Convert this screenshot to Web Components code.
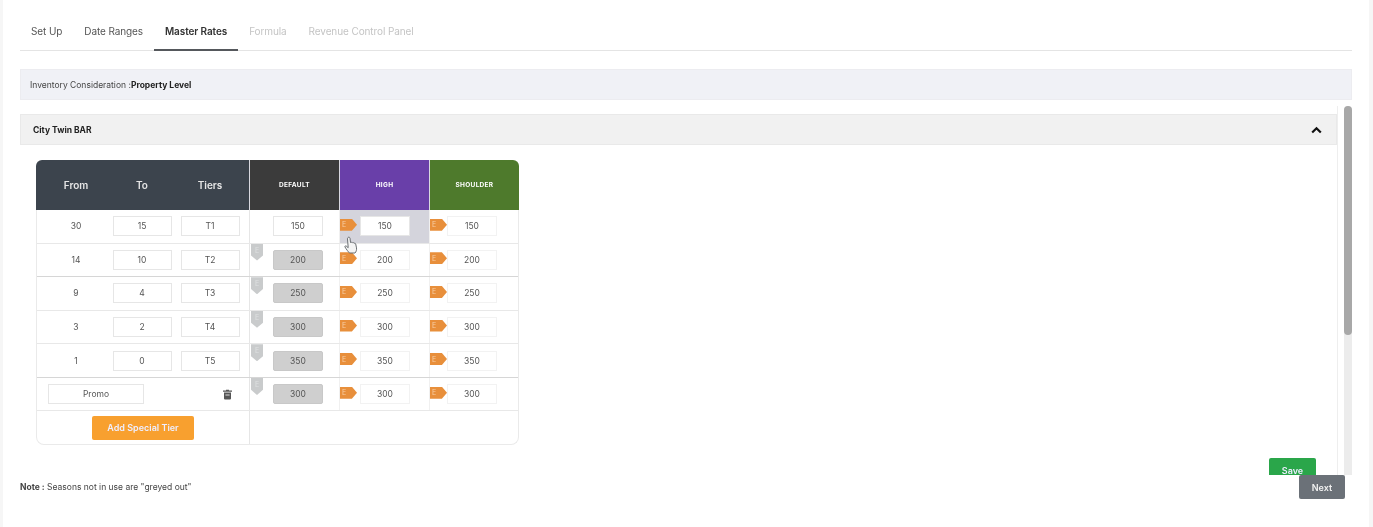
<!DOCTYPE html>
<html><head><meta charset="utf-8"><title>Master Rates</title>
<style>
html,body{margin:0;height:527px;overflow:hidden;background:#f6f6f6;font-family:Inter,"Liberation Sans",sans-serif}
</style></head><body>
<rm-app>
  <rm-tabs></rm-tabs>
  <rm-info>Inventory Consideration : <b>Property Level</b></rm-info>
  <rm-panel title="City Twin BAR">
    <rm-rate-table></rm-rate-table>
    <rm-button slot="action" color="#2aa64a" w="47">Save</rm-button>
  </rm-panel>
  <rm-footer><span slot="note"><b>Note :</b> Seasons not in use are "greyed out"</span></rm-footer>
  <rm-cursor></rm-cursor>
</rm-app>
<script>
const def=(n,render)=>customElements.define(n,class extends HTMLElement{constructor(){super();this.attachShadow({mode:'open'}).innerHTML=render(this)}});
def('rm-app',()=>`<style>:host{display:block;position:relative;box-sizing:border-box;width:1366px;height:527px;margin-left:3px;padding:0 17px;background:#fff;filter:blur(.45px)}</style><slot></slot>`);
def('rm-tabs',()=>{
  const t=[['Set Up',''],['Date Ranges',''],['Master Rates','on'],['Formula','off'],['Revenue Control Panel','off']];
  return `<style>
  :host{display:flex;height:51px;box-sizing:border-box;border-bottom:1px solid #e4e4e4;padding-left:0;align-items:stretch;font-size:10px;color:#555}
  div{box-sizing:border-box;padding:25px 11px 0;height:51px;white-space:nowrap;letter-spacing:-.1px}
  .on{color:#333;font-weight:600;border-bottom:2.5px solid #55585c}
  .off{color:#c4c4c4}
  </style>`+t.map(([x,c])=>`<div class="${c}">${x}</div>`).join('');
});
def('rm-info',()=>`<style>:host{display:flex;align-items:center;box-sizing:border-box;height:31px;margin-top:18px;padding-left:9px;background:#f0f1f6;border:1px solid #ececf0;font-size:8.5px;color:#444}::slotted(b){color:#222;font-weight:700}</style><slot></slot>`);
def('rm-panel',h=>`<style>
  :host{display:flex;gap:6px;height:369px;margin-top:6px;overflow:hidden}
  .main{width:1318px;padding-top:8px;box-sizing:border-box;display:flex;flex-direction:column;border-right:1px solid #eee;overflow:hidden}
  .head{flex:none;height:31px;box-sizing:border-box;display:flex;align-items:center;justify-content:space-between;padding:0 14px 0 12px;background:#f1f1f1;border:1px solid #e9e9e9;font-size:8.5px;font-weight:700;color:#222}
  .body{padding:15px 0 0 16px}
  .act{display:flex;justify-content:flex-end;padding:13px 21px 0 0}
  .bar{width:8px;background:#ececec;border-radius:4px 4px 0 0;flex:none}
  .thumb{height:229px;background:#a8a8a8;border-radius:4px}
  </style>
  <div class="main"><div class="head"><span>${h.getAttribute('title')}</span>
  <svg width="11" height="8" viewBox="0 0 11 8"><path d="M1.2 6.5 5.5 2.2 9.8 6.5" fill="none" stroke="#111" stroke-width="2.2"/></svg></div>
  <div class="body"><slot></slot></div><div class="act"><slot name="action"></slot></div></div>
  <div class="bar"><div class="thumb"></div></div>`);
def('rm-button',h=>`<style>:host{display:inline-flex;flex:none;align-items:center;justify-content:center;box-sizing:border-box;height:24px;width:${h.getAttribute('w')}px;background:${h.getAttribute('color')};color:#eef;font-size:9px;font-weight:600;border-radius:2px}</style><slot></slot>`);
def('rm-footer',()=>`<style>:host{display:flex;justify-content:space-between;align-items:center;height:24px;padding-right:7px;font-size:8.5px;color:#444}::slotted(*){color:#444}
  .next{display:flex;align-items:center;justify-content:center;box-sizing:border-box;width:46px;height:24px;background:#6b7178;color:#f1f1f1;font-size:9px;font-weight:600;border-radius:2px}</style>
  <slot name="note"></slot><div class="next">Next</div>`);
def('rm-tag',h=>`<style>:host{display:flex;flex:none;box-sizing:border-box;align-items:center;padding-left:2px;width:17px;height:12px;background:#e88f3b;color:#f8cfa6;font-size:7px;clip-path:polygon(0 0,70% 0,100% 50%,70% 100%,0 100%)}</style>E`);
def('rm-shield',h=>`<style>:host{display:flex;justify-content:center;box-sizing:border-box;padding-top:2px;position:absolute;left:1px;top:0;width:12px;height:17px;background:#c9cbcc;color:#dfe0e1;font-size:7px;clip-path:polygon(0 0,100% 0,100% 70%,50% 100%,0 70%)}</style>E`);
def('rm-field',h=>`<style>:host{display:flex;flex:none;align-items:center;justify-content:center;box-sizing:border-box;height:20px;width:${h.getAttribute('w')||50}px;border:1px solid #e6e6e6;font-size:8.5px;color:#555;background:#fff}
  :host([grey]){background:#cfcfcf;border-color:#c8c8c8;border-radius:2px;color:#555}:host([bare]){border-color:#f2f2f2}</style><slot></slot>`);
def('rm-rate-table',()=>{
  const rows=[[30,15,'T1',150,150,150],[14,10,'T2',200,200,200],[9,4,'T3',250,250,250],[3,2,'T4',300,300,300],[1,0,'T5',350,350,350],[null,null,null,300,300,300]];
  const strong=[0,1,0,0,1,0];
  const cell=(v,i,k)=>{
    if(k==0) return `<div class="c rate d">${i?'<rm-shield></rm-shield>':''}<rm-field ${i?'grey':''}>${v}</rm-field></div>`;
    const hi=(k==1&&i==0);
    return `<div class="c rate ${k==1?'h':'s'} ${hi?'hi':''}"><rm-tag></rm-tag><rm-field ${hi?'':'bare'}>${v}</rm-field></div>`;
  };
  const body=rows.map((r,i)=>{
    const left=r[0]===null?`<div class="left promo"><rm-field w="96">Promo</rm-field>
      <svg class="trash" width="9" height="11" viewBox="0 0 9 11"><path d="M3 1.5V.7h3v.8h3v1.2H0V1.5zM1 3.4h7v6.2a1 1 0 0 1-1 1H2a1 1 0 0 1-1-1z" fill="#555"/><path d="M2.4 5.5h4.2v1H2.4z" fill="#ddd"/></svg></div>`
     :`<div class="left"><div class="from">${r[0]}</div><div class="ic"><rm-field w="59">${r[1]}</rm-field></div><div class="ic"><rm-field w="59">${r[2]}</rm-field></div></div>`;
    return `<div class="row ${strong[i]?'st':''}">${left}${r.slice(3).map((v,k)=>cell(v,i,k)).join('')}</div>`;
  }).join('');
  return `<style>
  :host{display:block;width:483px;font-size:8.5px;color:#555}
  .hd{display:grid;grid-template-columns:213px 90px 90px 90px;height:50px;color:#fff;border-radius:6px 6px 0 0;overflow:hidden}
  .hl{display:grid;grid-template-columns:72px 68px 68px;background:#3c444d;align-items:center;font-size:10px;font-weight:600;color:#e6e6e6;text-align:center;padding-right:5px}
  .hl span:first-child{padding-left:8px}
  .hc{display:flex;align-items:center;justify-content:center;font-size:6.5px;font-weight:700;letter-spacing:.3px;border-left:1px solid #d8d8e0}
  .tb{height:235px;display:flex;flex-direction:column;border:1px solid #eaeaea;border-top:0;border-radius:0 0 8px 8px;box-sizing:border-box}
  .row{flex:1;display:grid;grid-template-columns:212px 90px 90px 90px;border-bottom:1px solid #e8e8e8;min-height:0}
  .row.st{border-bottom-color:#d6d6d6}
  .left{display:grid;grid-template-columns:71px 68px 68px;align-items:center;text-align:center;padding-right:5px}
  .from{padding-left:7px}.ic{display:flex;justify-content:center}
  .promo{display:flex;justify-content:space-between;padding:0 17px 0 11px}
  .trash{display:block}
  .c{display:flex;align-items:center;position:relative;border-left:1px solid #e6e6e6;box-sizing:border-box}
  .d{padding-left:23px}.h{gap:3px;padding-left:0}.s{padding-left:0;border-left-color:#f0f0f0}.h{border-left-color:#f0f0f0}
  .hi{background:#d4d4dc}
  .c rm-tag{margin-top:-3px}
  .last{display:flex;flex:1}
  .addc{width:212px;display:flex;align-items:center;justify-content:center}
  .rest{flex:1;border-left:1px solid #e6e6e6}
  </style>
  <div class="hd"><div class="hl"><span>From</span><span>To</span><span>Tiers</span></div>
  <div class="hc" style="background:#3b3b3b">DEFAULT</div><div class="hc" style="background:#693fa9">HIGH</div><div class="hc" style="background:#4e7a2c">SHOULDER</div></div>
  <div class="tb">${body}<div class="last"><div class="addc"><rm-button color="#f8a02f" w="102">Add Special Tier</rm-button></div><div class="rest"></div></div></div>`;
});
def('rm-cursor',()=>`<style>:host{position:absolute;left:340px;top:236px;width:16px;height:20px;display:block}</style>
<svg width="16" height="20" viewBox="0 0 16 20"><path d="M5 1.5c.8-.7 1.8-.3 2 .7l.5 4.3 1-.2c.6-.1 1 .1 1.200.5.6-.3 1.200-.1 1.500.4.600-.2 1.200 0 1.500.7l.8 4c.3 2-.3 3.800-1.500 5.100H6.500C5.500 16 3 13 2 11c-.4-.8.500-1.500 1.200-1l2 1.700L4.500 3c0-.600.100-1.100.5-1.500z" fill="#f4f4f4" stroke="#6a6e72" stroke-width="1"/></svg>`);
</script>
</body></html>
